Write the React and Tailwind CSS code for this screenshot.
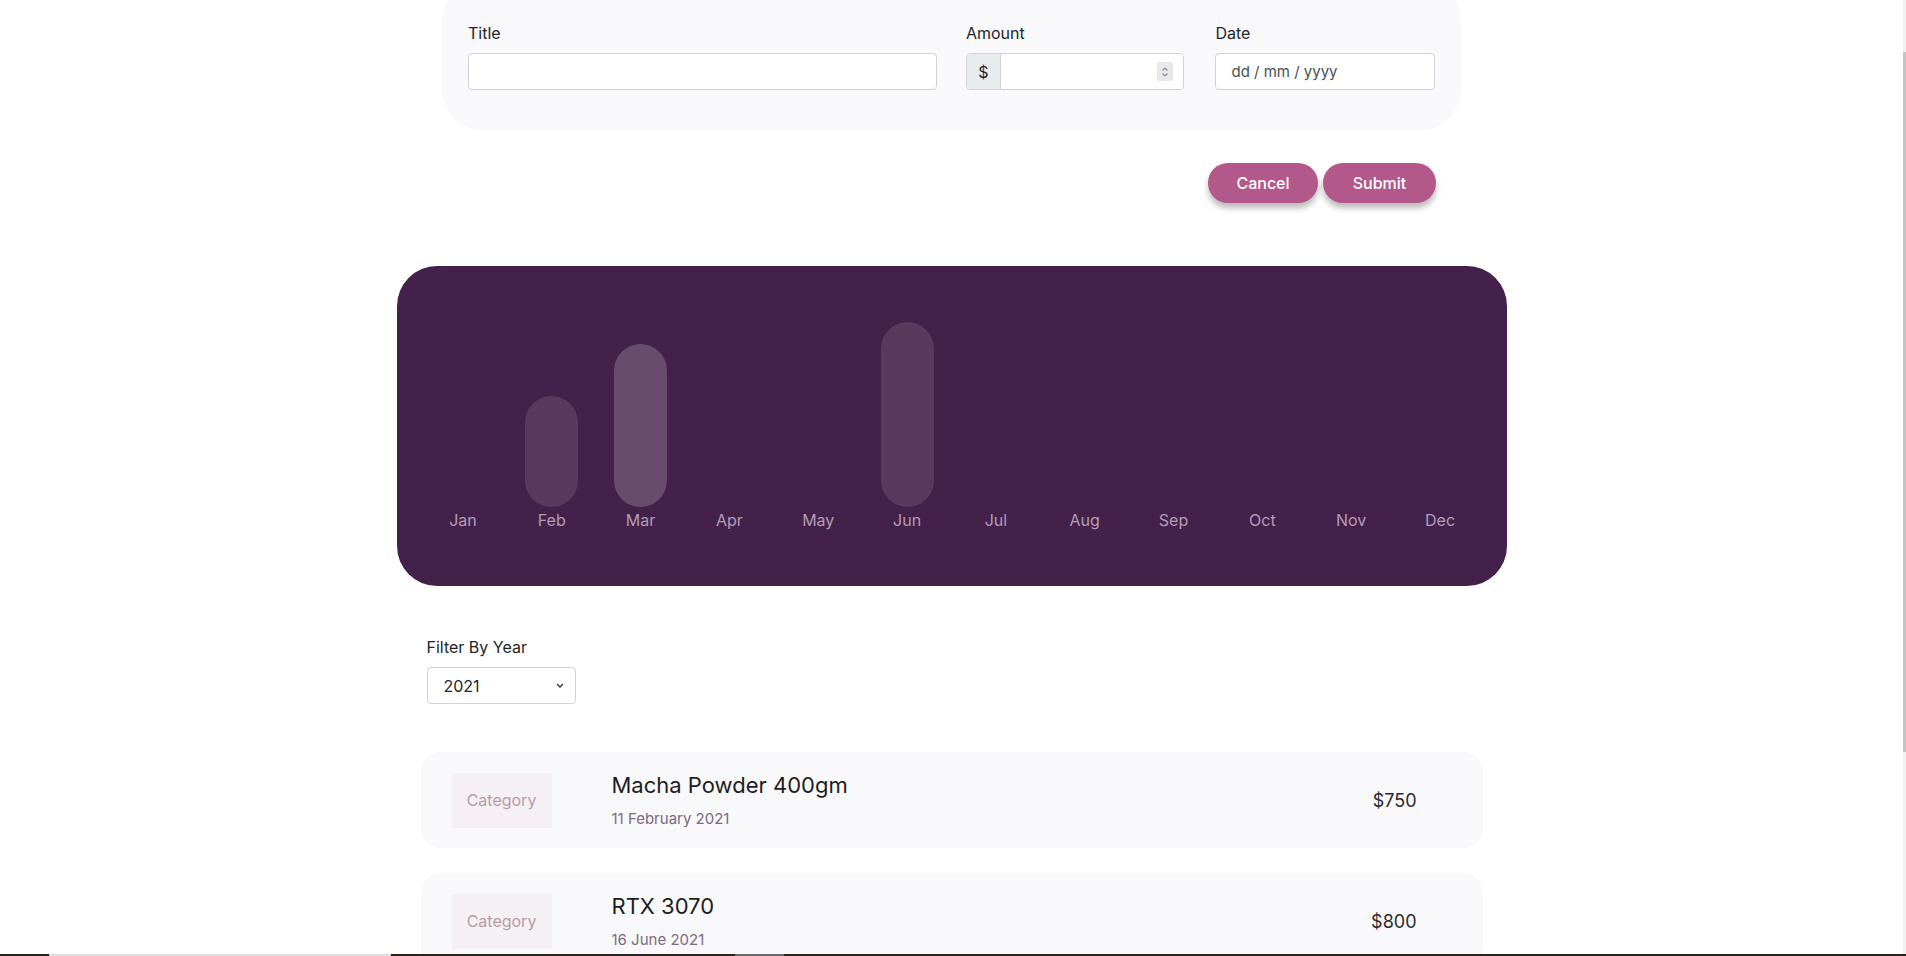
import React from 'react';

const months = [
    { name: 'Jan', h: 0 },
    { name: 'Feb', h: 111, color: 'bg-[#59395e]' },
    { name: 'Mar', h: 163, color: 'bg-[#684c6d]' },
    { name: 'Apr', h: 0 },
    { name: 'May', h: 0 },
    { name: 'Jun', h: 185, color: 'bg-[#59395e]' },
    { name: 'Jul', h: 0 },
    { name: 'Aug', h: 0 },
    { name: 'Sep', h: 0 },
    { name: 'Oct', h: 0 },
    { name: 'Nov', h: 0 },
    { name: 'Dec', h: 0 },
];

const expenses = [
    { title: 'Macha Powder 400gm', date: '11 February 2021', amount: '$750' },
    { title: 'RTX 3070', date: '16 June 2021', amount: '$800' },
];

const ExpenseForm = () => (
    <div>
        <div className="w-[1019px] mx-auto -mt-[20px] bg-[#f9f9fb] rounded-[40px] pt-[41px] pb-[40px] px-[26px]">
            <div className="flex">
                <div className="w-[470px]">
                    <label className="block text-[16px] leading-6 text-[#212529] mb-2">Title</label>
                    <div className="h-[37px] bg-white border border-[#ced4da] rounded-[4px]"></div>
                </div>
                <div className="w-[219px] ml-[29px]">
                    <label className="block text-[16px] leading-6 text-[#212529] mb-2">Amount</label>
                    <div className="h-[37px] flex border border-[#ced4da] rounded-[4px] overflow-hidden">
                        <span className="w-[34px] bg-[#e9ecef] border-r border-[#ced4da] flex items-center justify-center text-[16px] text-[#212529]">$</span>
                        <div className="flex-1 bg-white flex items-center justify-end pr-[10px]">
                            <span className="w-[16px] h-[19px] bg-[#e9e9ec] rounded-[2px] flex items-center justify-center">
                                <svg width="8" height="12" viewBox="0 0 8 12" fill="none" stroke="#8a8a8f" strokeWidth="1.1">
                                    <path d="M1.5 4.5 L4 2 L6.5 4.5" />
                                    <path d="M1.5 7.5 L4 10 L6.5 7.5" />
                                </svg>
                            </span>
                        </div>
                    </div>
                </div>
                <div className="w-[220px] ml-[31px]">
                    <label className="block text-[16px] leading-6 text-[#212529] mb-2">Date</label>
                    <div className="h-[37px] bg-white border border-[#ced4da] rounded-[4px] flex items-center pt-[2px] px-[15px] text-[15px] text-[#495057]">
                        dd / mm / yyyy
                    </div>
                </div>
            </div>
        </div>
        <div className="w-[969px] mx-auto flex justify-end gap-[5px] mt-[33px]">
            <button className="w-[110px] h-[40px] rounded-full bg-[#b3588b] text-white text-[16px] font-medium shadow-[0_5px_6px_rgba(0,0,0,0.28)]">
                Cancel
            </button>
            <button className="w-[113px] h-[40px] rounded-full bg-[#b3588b] text-white text-[16px] font-medium shadow-[0_5px_6px_rgba(0,0,0,0.28)]">
                Submit
            </button>
        </div>
    </div>
);

const Chart = () => (
    <div className="w-[1110px] mx-auto mt-[63px] bg-[#43214a] rounded-[40px] px-[22px] pt-[56px] pb-[56px] flex">
        {months.map((m) => (
            <div key={m.name} className="flex-1 flex flex-col items-center">
                <div className="h-[185px] w-full flex items-end justify-center">
                    {m.h > 0 && (
                        <div className={`w-[53px] rounded-full ${m.color}`} style={{ height: m.h }}></div>
                    )}
                </div>
                <span className="mt-[3px] text-[16px] leading-5 text-[#b39cb7]">{m.name}</span>
            </div>
        ))}
    </div>
);

const ExpenseItem = ({ title, date, amount }) => (
    <div className="h-[96px] bg-[#f9f9fb] rounded-[20px] flex items-center pl-[31px] pr-[66px]">
        <div className="w-[100px] h-[55px] bg-[#f5f0f3] flex items-center justify-center text-[16px] text-[#b89ca5]">
            Category
        </div>
        <div className="ml-[60px] flex-1 flex flex-col">
            <h2 className="text-[22px] leading-[28px] text-[#1d1d1f]">{title}</h2>
            <span className="mt-[10px] text-[15px] leading-5 text-[#7e6882]">{date}</span>
        </div>
        <span className="text-[18px] text-[#2a2a2e]">{amount}</span>
    </div>
);

const App = () => {
    return (
        <div className="relative h-[956px] overflow-hidden bg-white font-['Inter',sans-serif]">
            <div className="mr-[3px]">
                <ExpenseForm />
                <Chart />

                <div className="w-[1110px] mx-auto mt-[49px] px-[30px]">
                    <label className="block text-[16px] leading-6 text-[#212529] mb-2">Filter By Year</label>
                    <div className="w-[149px] h-[37px] border border-[#ced4da] rounded-[4px] flex items-center justify-between pl-[16px] pr-[10px] text-[16px] text-[#212529]">
                        2021
                        <svg width="10" height="7" viewBox="0 0 10 7" fill="none" stroke="#343a40" strokeWidth="1.4">
                            <path d="M2 2 L5 5 L8 2" />
                        </svg>
                    </div>
                </div>

                <div className="w-[1062px] mx-auto mt-[48px] flex flex-col gap-[25px]">
                    {expenses.map((e) => (
                        <ExpenseItem key={e.title} {...e} />
                    ))}
                </div>
            </div>

            {/* window chrome leftovers */}
            <div className="absolute right-0 top-0 w-[3px] h-full bg-[#f1f1f1]">
                <div className="mt-[52px] h-[700px] bg-[#c4c4c4]"></div>
            </div>
            <div className="absolute left-0 bottom-0 w-full h-[2px] bg-[#2a2420] flex">
                <div className="ml-[49px] w-[342px] bg-[#dedede]"></div>
                <div className="ml-[344px] w-[49px] bg-[#6a6a6a]"></div>
            </div>
        </div>
    );
};

export default App;
